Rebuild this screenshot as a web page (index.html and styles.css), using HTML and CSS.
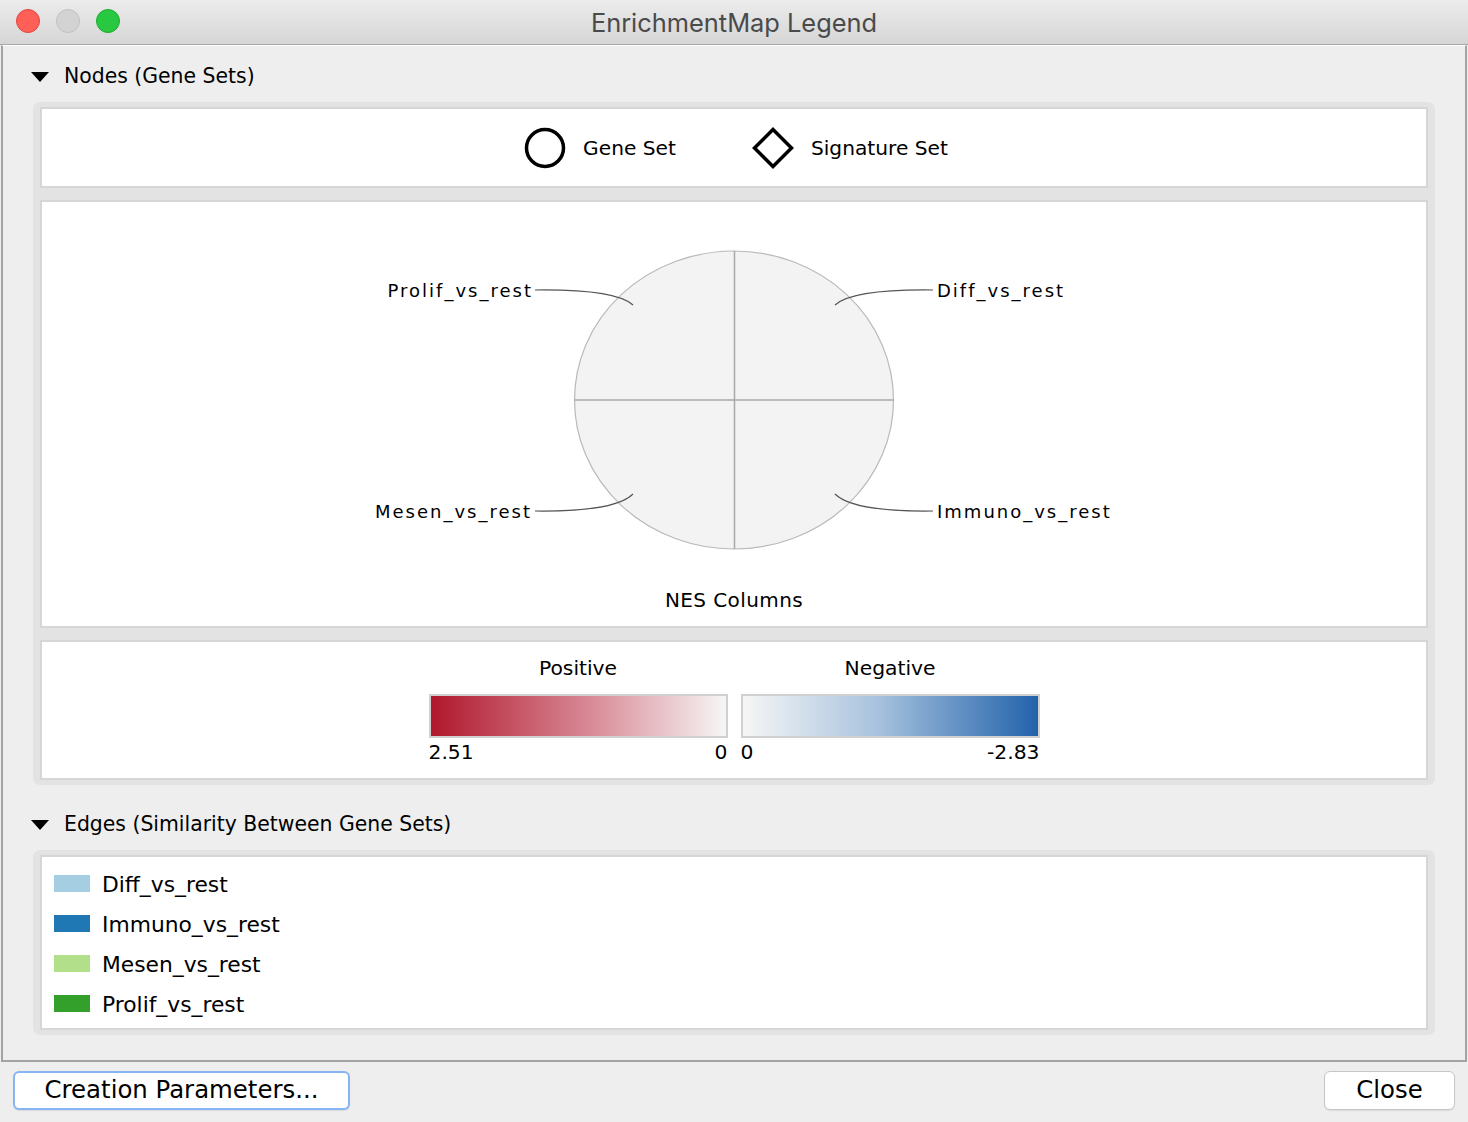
FILE: index.html
```html
<!DOCTYPE html>
<html>
<head>
<meta charset="utf-8">
<title>EnrichmentMap Legend</title>
<link rel="stylesheet" href="styles.css">
</head>
<body>
<div class="window">
  <div class="titlebar">
    <div class="lights">
      <span class="light red"></span>
      <span class="light gray"></span>
      <span class="light green"></span>
    </div>
    <div class="title">EnrichmentMap Legend</div>
  </div>

  <div class="content">
    <div class="section-header">
      <span class="disclosure"></span>
      <span>Nodes (Gene Sets)</span>
    </div>
    <div class="frame">
      <div class="panel shapes">
        <div class="shape-item">
          <svg width="42" height="42" viewBox="0 0 42 42"><circle cx="21" cy="21" r="18.5" fill="none" stroke="#000" stroke-width="3.5"/></svg>
          <span>Gene Set</span>
        </div>
        <div class="shape-item">
          <svg width="42" height="42" viewBox="0 0 42 42"><polygon points="21,2.5 39.5,21 21,39.5 2.5,21" fill="none" stroke="#000" stroke-width="3.5" stroke-linejoin="miter"/></svg>
          <span>Signature Set</span>
        </div>
      </div>

      <div class="panel chart">
        <svg width="1384" height="424" viewBox="0 0 1384 424">
          <ellipse cx="692" cy="198" rx="159.5" ry="149" fill="#f3f3f3" stroke="#b9b9b9" stroke-width="1.2"/>
          <line x1="692.5" y1="49" x2="692.5" y2="347" stroke="#a9a9a9" stroke-width="1.5"/>
          <line x1="532.5" y1="198" x2="851.5" y2="198" stroke="#a9a9a9" stroke-width="1.5"/>
          <g fill="none" stroke="#555" stroke-width="1.2">
            <path d="M493,88 Q573,87 591,103"/>
            <path d="M891,88 Q811,87 793,103"/>
            <path d="M493,309 Q573,310 591,292"/>
            <path d="M891,309 Q811,310 793,292"/>
          </g>
          <g class="chart-label">
            <text x="491" y="95" text-anchor="end">Prolif_vs_rest</text>
            <text x="895" y="95">Diff_vs_rest</text>
            <text x="490" y="316" text-anchor="end">Mesen_vs_rest</text>
            <text x="895" y="316">Immuno_vs_rest</text>
          </g>
          <text class="chart-title" x="692" y="405" text-anchor="middle">NES Columns</text>
        </svg>
      </div>

      <div class="panel colors">
        <div class="scale">
          <div class="scale-title">Positive</div>
          <div class="bar bar-pos"></div>
          <div class="scale-labels"><span>2.51</span><span>0</span></div>
        </div>
        <div class="scale">
          <div class="scale-title">Negative</div>
          <div class="bar bar-neg"></div>
          <div class="scale-labels"><span>0</span><span>-2.83</span></div>
        </div>
      </div>
    </div>

    <div class="section-header edges-header">
      <span class="disclosure"></span>
      <span>Edges (Similarity Between Gene Sets)</span>
    </div>
    <div class="frame">
      <div class="panel edges">
        <div class="edge-row"><span class="swatch sw-diff"></span><span>Diff_vs_rest</span></div>
        <div class="edge-row"><span class="swatch sw-immuno"></span><span>Immuno_vs_rest</span></div>
        <div class="edge-row"><span class="swatch sw-mesen"></span><span>Mesen_vs_rest</span></div>
        <div class="edge-row"><span class="swatch sw-prolif"></span><span>Prolif_vs_rest</span></div>
      </div>
    </div>
  </div>

  <div class="buttonbar">
    <button class="btn btn-focus">Creation Parameters...</button>
    <button class="btn btn-close">Close</button>
  </div>
</div>
</body>
</html>
```

FILE: styles.css
```css
* { box-sizing: border-box; }

html, body {
  margin: 0;
  padding: 0;
}

body {
  width: 1468px;
  height: 1122px;
  background: #eeeeee;
  font-family: "DejaVu Sans", "Noto Sans", sans-serif;
  color: #000;
  overflow: hidden;
}

.window {
  width: 1468px;
  height: 1122px;
  display: flex;
  flex-direction: column;
}

.titlebar {
  height: 45px;
  flex: none;
  position: relative;
  display: flex;
  align-items: center;
  justify-content: center;
  background: linear-gradient(to bottom, #ececec, #d6d6d6);
  border-bottom: 1px solid #a8a8a8;
}

.lights {
  position: absolute;
  left: 16px;
  top: 9px;
  display: flex;
  gap: 16px;
}

.light {
  width: 24px;
  height: 24px;
  border-radius: 50%;
  display: block;
}
.light.red { background: #fe5f57; border: 1px solid #e2463f; }
.light.gray { background: #d3d3d3; border: 1px solid #c1c1c1; }
.light.green { background: #28c840; border: 1px solid #1eab2e; }

.title {
  font-family: "Inter", "Liberation Sans", sans-serif;
  font-size: 25.4px;
  color: #4a4a4a;
  margin-top: 0;
}

.content {
  flex: none;
  height: 1017px;
  margin: 0 1px;
  border: 2px solid #a3a3a3;
  border-top: 1px solid #ffffff;
  padding: 18px 30px 0 30px;
  background: #eeeeee;
  display: flex;
  flex-direction: column;
}

.section-header {
  height: 24px;
  display: flex;
  align-items: center;
  font-size: 20.4px;
  margin-left: -2px;
  gap: 15px;
}

.edges-header {
  margin-top: 27px;
}

.disclosure {
  width: 0;
  height: 0;
  border-left: 9.5px solid transparent;
  border-right: 9.5px solid transparent;
  border-top: 10px solid #000;
  display: block;
  margin-top: 2px;
}

.frame {
  margin-top: 14px;
  background: #e3e3e3;
  border-radius: 7px;
  padding: 5px 7px;
  display: flex;
  flex-direction: column;
  gap: 12px;
}

.panel {
  background: #ffffff;
  border: 2px solid #d6d6d6;
}

.shapes {
  height: 81px;
  display: flex;
  justify-content: center;
  align-items: center;
  gap: 76px;
  font-size: 20.2px;
  padding-left: 4px;
}

.shape-item {
  display: flex;
  align-items: center;
  gap: 17px;
}

.shape-item svg { display: block; }

.chart {
  height: 428px;
}

.chart svg { display: block; }

.chart-label {
  font-family: "DejaVu Sans", sans-serif;
  font-size: 18px;
  letter-spacing: 2px;
  fill: #000;
}

.chart-title {
  font-family: "DejaVu Sans", sans-serif;
  font-size: 20px;
  letter-spacing: 0.4px;
  fill: #000;
}

.colors {
  height: 140px;
  display: flex;
  justify-content: center;
  gap: 13px;
  padding-top: 14px;
}

.scale {
  width: 299px;
  display: flex;
  flex-direction: column;
}

.scale-title {
  height: 24px;
  line-height: 24px;
  text-align: center;
  font-size: 20.3px;
}

.bar {
  margin-top: 14px;
  height: 44px;
  border: 2px solid #d0d0d0;
}

.bar-pos { background: linear-gradient(to right, #b0172c, #d98c98 55%, #f6f6f6); }
.bar-neg { background: linear-gradient(to right, #f6f6f6, #a8c3de 45%, #2262ab); }

.scale-labels {
  margin-top: 2px;
  height: 24px;
  line-height: 24px;
  display: flex;
  justify-content: space-between;
  font-size: 20.3px;
}

.edges {
  height: 175px;
  padding: 7px 0 0 12px;
  display: flex;
  flex-direction: column;
}

.edge-row {
  height: 40px;
  display: flex;
  align-items: center;
  gap: 12px;
  font-size: 21.8px;
}

.swatch {
  width: 36px;
  height: 17px;
  display: block;
  margin-top: -2px;
}
.sw-diff { background: #a6cee3; }
.sw-immuno { background: #1f78b4; }
.sw-mesen { background: #b2df8a; }
.sw-prolif { background: #33a02c; }

.buttonbar {
  flex: 1;
  display: flex;
  justify-content: space-between;
  align-items: center;
  padding: 0 13px 3px 13px;
}

.btn {
  font-family: "DejaVu Sans", sans-serif;
  font-size: 24.4px;
  color: #000;
  background: #ffffff;
  border: 1px solid #c6c6c6;
  border-radius: 6px;
  height: 39px;
  padding: 0;
  line-height: 1;
  white-space: nowrap;
  box-shadow: 0 1px 1px rgba(0,0,0,0.08);
}

.btn-focus {
  width: 337px;
  border: 2px solid #86b5f3;
}
.btn-close { width: 131px; }
```
